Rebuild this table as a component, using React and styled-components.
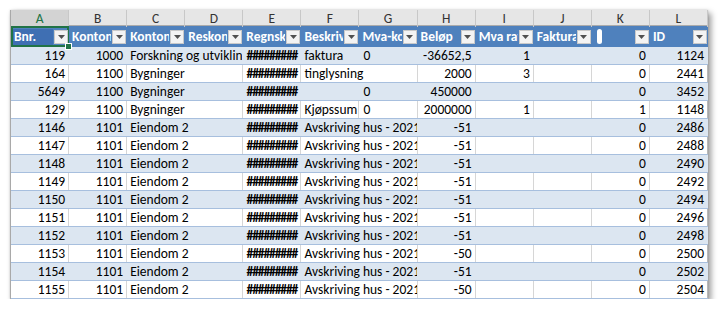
import React from 'react'
import styled, { createGlobalStyle } from 'styled-components'

const GlobalStyle = createGlobalStyle`
  body {
    margin: 0;
    background: #ffffff;
  }
`

const LETTERS = ['A', 'B', 'C', 'D', 'E', 'F', 'G', 'H', 'I', 'J', 'K', 'L']
const HEADERS = ['Bnr.', 'Kontonr', 'Kontonavn', 'Reskontro', 'Regnskapsdato', 'Beskrivelse', 'Mva-kode', 'Beløp', 'Mva rate', 'Fakturanr', '', 'ID']

const rows = [
  { a: '119', b: '1000', c: 'Forskning og utvikling', f: 'faktura', g: '0', h: '-36652,5', i: '1', k: '0', l: '1124' },
  { a: '164', b: '1100', c: 'Bygninger', f: 'tinglysning', h: '2000', i: '3', k: '0', l: '2441' },
  { a: '5649', b: '1100', c: 'Bygninger', g: '0', h: '450000', k: '0', l: '3452' },
  { a: '129', b: '1100', c: 'Bygninger', f: 'Kjøpssum', g: '0', h: '2000000', i: '1', k: '1', l: '1148' },
  ...[
    ['1146', '-51', '2486'],
    ['1147', '-51', '2488'],
    ['1148', '-51', '2490'],
    ['1149', '-51', '2492'],
    ['1150', '-51', '2494'],
    ['1151', '-51', '2496'],
    ['1152', '-51', '2498'],
    ['1153', '-50', '2500'],
    ['1154', '-51', '2502'],
    ['1155', '-50', '2504'],
  ].map(([a, h, l]) => ({ a, b: '1101', c: 'Eiendom 2', f: 'Avskriving hus - 2021', h, k: '0', l })),
]

function FilterArrow() {
  return (
    <svg width="7" height="4" viewBox="0 0 7 4">
      <path d="M0 0 L7 0 L3.5 4 Z" fill="#505050" />
    </svg>
  )
}

function App() {
  return (
    <Page>
      <GlobalStyle />
      <Sheet>
        <LetterRow>
          {LETTERS.map((l, idx) => (
            <Letter key={l} active={idx === 0}>{l}</Letter>
          ))}
        </LetterRow>
        <HeaderRow>
          {HEADERS.map((h, idx) => (
            <HeaderCell key={idx} selected={idx === 0}>
              <HeaderText selected={idx === 0}>
                {idx === 10 ? <Pill /> : h}
              </HeaderText>
              <FilterButton>
                <FilterArrow />
              </FilterButton>
              {idx === 0 && <FillHandle />}
            </HeaderCell>
          ))}
        </HeaderRow>
        {rows.map((r, idx) => {
          const band = idx % 2 === 0
          const fSpan = r.f && !r.g
          return (
            <DataRow key={idx} band={band}>
              <Cell band={band} align="right">{r.a}</Cell>
              <Cell band={band} align="right">{r.b}</Cell>
              <Cell band={band} span={2}>{r.c}</Cell>
              <Cell band={band} align="center"><Hash>#########</Hash></Cell>
              <Cell band={band} span={fSpan ? 2 : 1}>{r.f}</Cell>
              {!fSpan && <Cell band={band}>{r.g ? <Gap>{r.g}</Gap> : ''}</Cell>}
              <Cell band={band} align="right">{r.h}</Cell>
              <Cell band={band} align="right">{r.i}</Cell>
              <Cell band={band} />
              <Cell band={band} align="right">{r.k}</Cell>
              <Cell band={band} align="right" last>{r.l}</Cell>
            </DataRow>
          )
        })}
      </Sheet>
    </Page>
  )
}

export default App

const Page = styled.div`
  padding: 10px 0 0 10px;
  font-family: "Carlito", "Lato", "Liberation Sans", sans-serif;
`

const Sheet = styled.div`
  width: 698px;
  background: #ffffff;
  border-left: 1px solid #a9a9a9;
  box-sizing: border-box;
  box-shadow: 3px 3px 6px rgba(0, 0, 0, 0.4), 0 0 2px rgba(0, 0, 0, 0.15);
`

const gridCols = `
  display: grid;
  grid-template-columns: repeat(12, 1fr);
`

const LetterRow = styled.div`
  ${gridCols}
  height: 15px;
  background: #e6e6e6;
  border-bottom: 1px solid #ababab;
  box-sizing: content-box;
`

const Letter = styled.div`
  display: flex;
  align-items: center;
  justify-content: center;
  font-size: 13.5px;
  color: ${({ active }) => (active ? '#217346' : '#333333')};
  background: ${({ active }) => (active ? '#d3d3d3' : 'transparent')};
  border-right: 1px solid #c8c8c8;
`

const HeaderRow = styled.div`
  ${gridCols}
  height: 21px;
  background: #4f81bd;
`

const HeaderCell = styled.div`
  position: relative;
  display: flex;
  align-items: center;
  min-width: 0;
  padding: 0 1px 0 2px;
  box-shadow: ${({ selected }) => (selected ? 'inset 0 0 0 2px #217346' : 'none')};
`

const HeaderText = styled.div`
  flex: 1;
  min-width: 0;
  overflow: hidden;
  white-space: nowrap;
  color: #ffffff;
  font-weight: bold;
  font-size: 13.5px;
  height: 16px;
  line-height: 16px;
  padding-left: 1px;
  background: ${({ selected }) => (selected ? '#3f6fb3' : 'transparent')};
  display: flex;
  align-items: center;
`

const Pill = styled.span`
  display: block;
  width: 5px;
  height: 15px;
  border-radius: 3px;
  background: #ffffff;
  margin-left: 2px;
`

const FilterButton = styled.div`
  flex: none;
  width: 14px;
  height: 14px;
  margin-left: 1px;
  display: flex;
  align-items: center;
  justify-content: center;
  background: #f3f3f3;
  border: 1px solid #c9c9c9;
  box-sizing: border-box;
`

const FillHandle = styled.div`
  position: absolute;
  right: -3px;
  bottom: -3px;
  width: 5px;
  height: 5px;
  background: #217346;
  border: 1px solid #ffffff;
  z-index: 2;
`

const DataRow = styled.div`
  ${gridCols}
  height: 18px;
  box-sizing: border-box;
  background: ${({ band }) => (band ? '#dce6f1' : '#ffffff')};
  border-bottom: 1px solid #a7bfde;
`

const Cell = styled.div`
  grid-column: span ${({ span }) => span || 1};
  min-width: 0;
  overflow: hidden;
  white-space: nowrap;
  font-size: 13.5px;
  line-height: 17px;
  color: #000000;
  padding: 0 3px;
  text-align: ${({ align }) => align || 'left'};
  border-right: 1px solid ${({ band, last }) => (band ? 'transparent' : last ? '#b8b8b8' : '#d6d6d6')};
`

const Hash = styled.span`
  letter-spacing: -1.1px;
  font-weight: 600;
`

const Gap = styled.span`
  padding-left: 1px;
`
